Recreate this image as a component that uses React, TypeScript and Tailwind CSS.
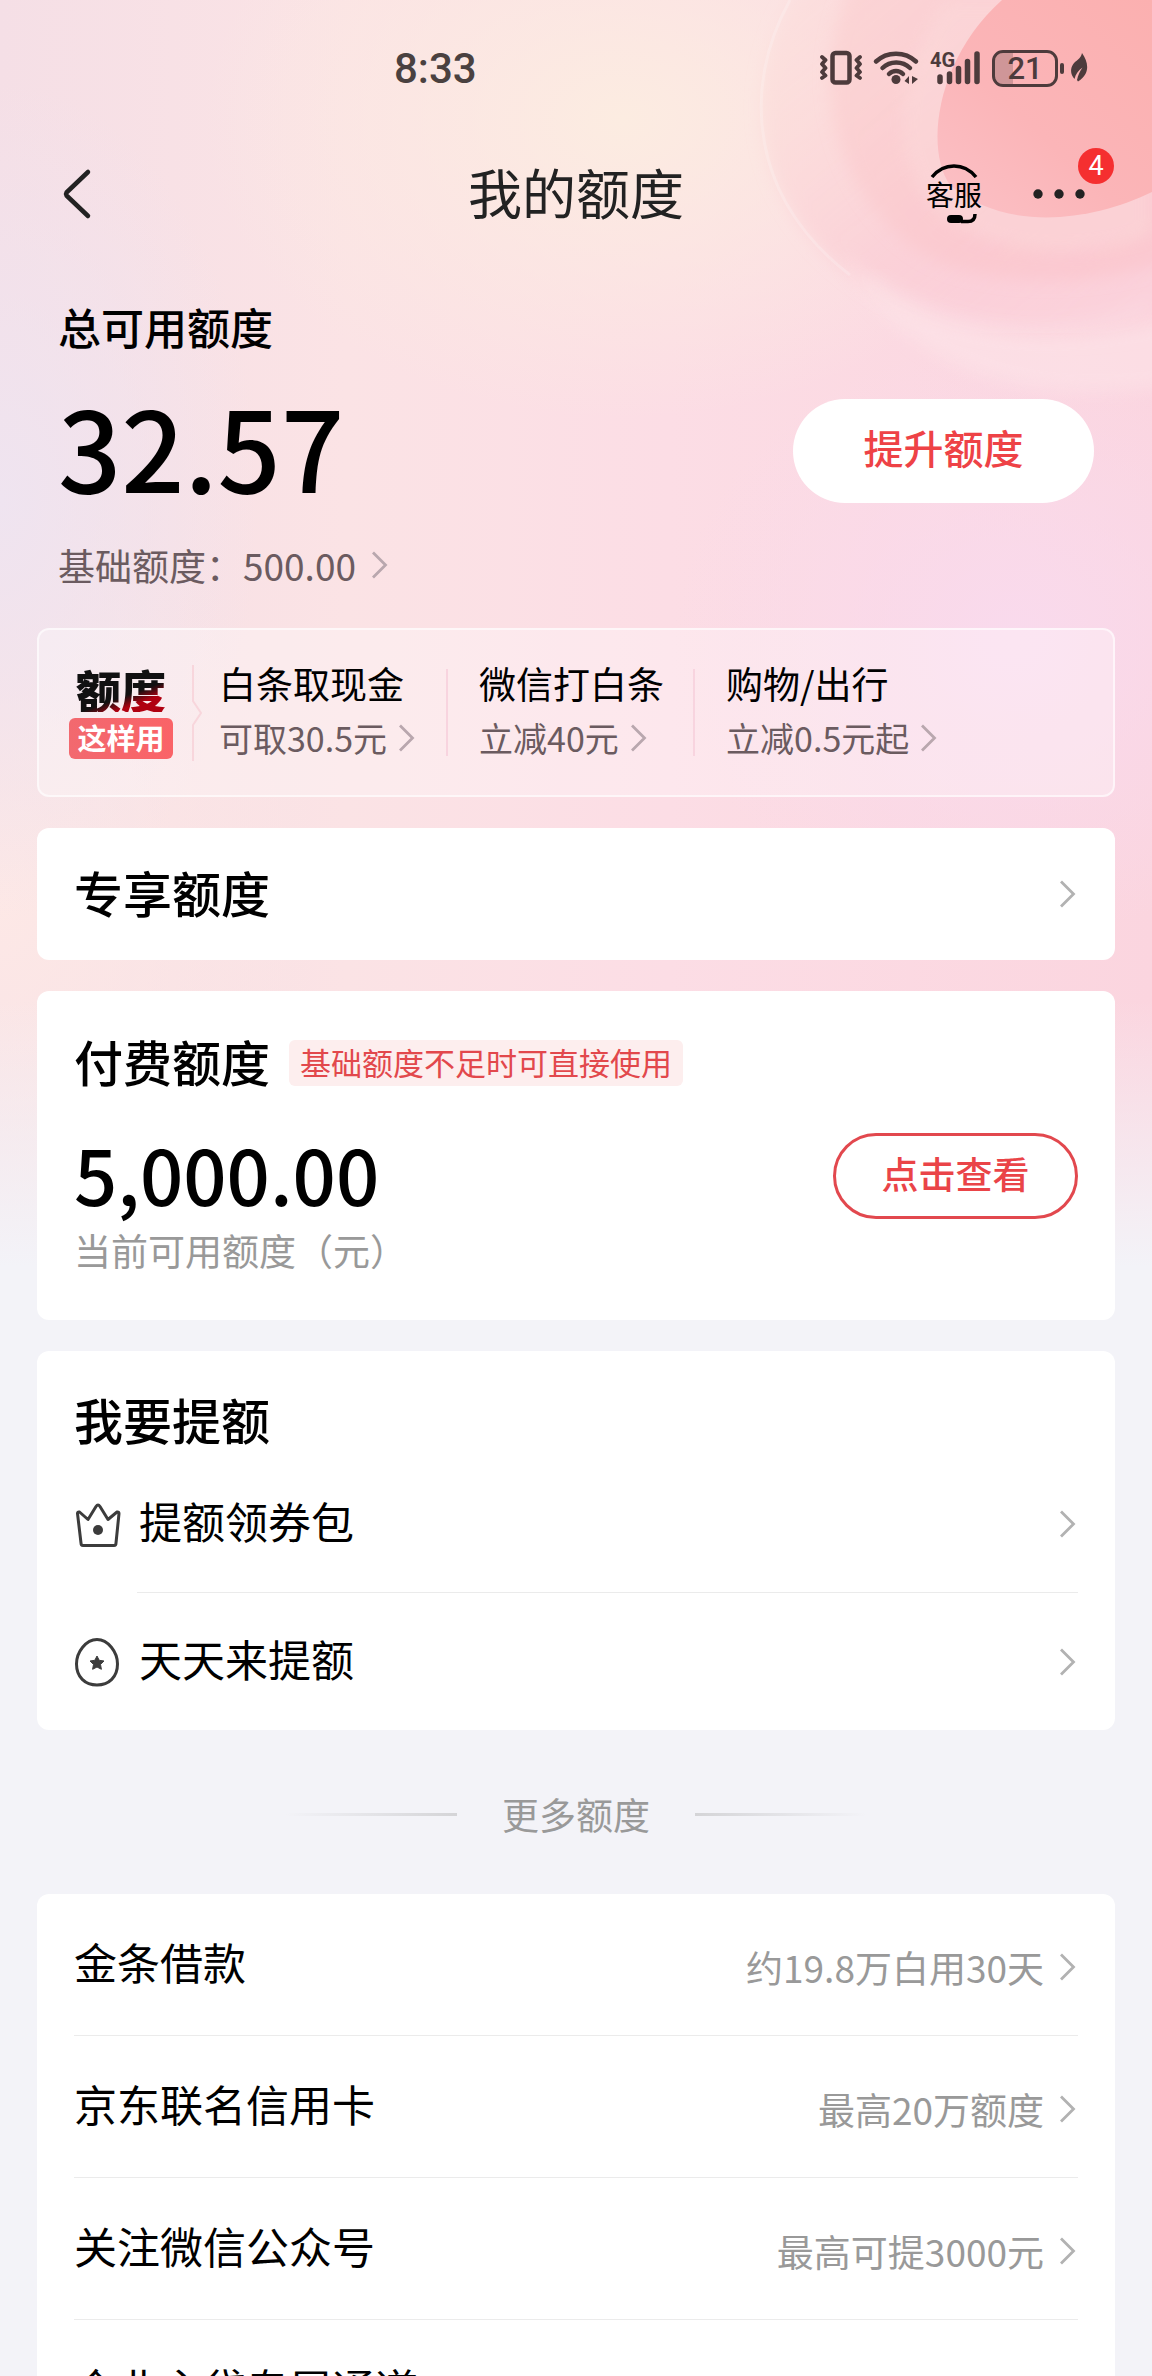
const usages = [
  { title: '白条取现金', desc: '可取30.5元' },
  { title: '微信打白条', desc: '立减40元' },
  { title: '购物/出行', desc: '立减0.5元起' },
];

const moreList = [
  { title: '金条借款', value: '约19.8万白用30天' },
  { title: '京东联名信用卡', value: '最高20万额度' },
  { title: '关注微信公众号', value: '最高可提3000元' },
  { title: '企业主贷专属通道', value: '' },
];

function Chevron({ className = 'text-[#b2b2b2]' }: { className?: string }) {
  return (
    <svg className={`h-[30px] w-[18px] shrink-0 ${className}`} viewBox="0 0 18 30" fill="none" stroke="currentColor" strokeWidth="2.8">
      <path d="M1 2.500 13.500 15 1 27.500" />
    </svg>
  );
}

function Background() {
  return (
    <>
      <div className="absolute inset-x-0 top-0 h-[1290px] bg-[radial-gradient(ellipse_420px_300px_at_54%_120px,#fcece1_0%,#fcece100_100%),radial-gradient(ellipse_260px_420px_at_0%_500px,#efe4f0_0%,#efe4f000_100%),radial-gradient(ellipse_340px_300px_at_88%_640px,#f9daed_0%,#f9daed00_100%),radial-gradient(ellipse_320px_420px_at_0%_900px,#fde8e6_0%,#fde8e600_100%),linear-gradient(90deg,#f5dfe6_0%,#fbe3e5_30%,#fcdde5_58%,#fbd5df_100%)]"></div>
      <svg className="absolute top-0 right-0 h-[460px] w-[460px]" viewBox="692 0 460 460" fill="none">
        <defs>
          <linearGradient id="halo" x1="0" y1="0" x2="0.900" y2="1">
            <stop offset="0" stopColor="#fcdcd8" stopOpacity="0.350" />
            <stop offset="0.600" stopColor="#fbc6cf" stopOpacity="0.550" />
            <stop offset="1" stopColor="#fcccd6" stopOpacity="0.400" />
          </linearGradient>
          <linearGradient id="ring" x1="0" y1="0" x2="1" y2="1">
            <stop offset="0" stopColor="#fbc9c9" stopOpacity="0.400" />
            <stop offset="1" stopColor="#fbbfc6" stopOpacity="0.500" />
          </linearGradient>
          <linearGradient id="core" x1="1" y1="0" x2="0.100" y2="1">
            <stop offset="0" stopColor="#fbb0b0" />
            <stop offset="0.600" stopColor="#fbb5b8" />
            <stop offset="1" stopColor="#fbc0c5" />
          </linearGradient>
          <filter id="soft" x="-10%" y="-10%" width="120%" height="120%">
            <feGaussianBlur stdDeviation="8" />
          </filter>
        </defs>
        <path d="M790 0C740 90 752 200 850 275 940 345 1070 350 1170 325V-20H800Z" fill="url(#halo)" filter="url(#soft)" />
        <path d="M845 0C800 110 860 240 960 270 1040 290 1110 280 1170 262V-20H850Z" fill="url(#ring)" filter="url(#soft)" />
        <path d="M945 0C900 60 880 160 940 215 1010 265 1100 255 1152 235V0Z" fill="#fcdcdc" opacity="0.450" filter="url(#soft)" />
        <path d="M1002 0C935 60 925 150 950 185 1005 232 1090 222 1152 192V0Z" fill="url(#core)" />
        <path d="M842 250C920 340 1050 350 1180 315V385C1010 412 890 360 842 250Z" fill="#fde6e9" opacity="0.500" filter="url(#soft)" />
        <path d="M790 0C740 90 752 200 850 275" stroke="#fff" strokeOpacity="0.200" strokeWidth="3" />
        <path d="M870 275C950 335 1070 340 1152 305" stroke="#fff" strokeOpacity="0.200" strokeWidth="8" filter="url(#soft)" />
      </svg>
      <div className="absolute inset-x-0 top-[1000px] h-[290px] bg-[linear-gradient(180deg,#f3f3f800_0%,#f3f3f8_92%)]"></div>
    </>
  );
}

function StatusIcons() {
  return (
    <div className="flex items-center text-[#4d3b3c]">
      <svg className="h-[38px] w-[100px]" viewBox="819 49 100 38" fill="none" stroke="currentColor" strokeLinecap="round" strokeLinejoin="round">
        <rect x="831.500" y="53" width="17" height="29.500" rx="3" strokeWidth="4.500" />
        <path d="M821 57l3.500 3-3.500 4 3.500 4-3.500 4 3.500 3.500-3.500 2.500M859 57l-3.500 3 3.500 4-3.500 4 3.500 4-3.500 3.500 3.500 2.500" strokeWidth="3.800" />
        <path d="M875 61.500c11-10.500 29-10.500 40 0M881.500 68c7.500-7.500 20-7.500 27.500 0M888 74c4-4 10-4 14 0" strokeWidth="4.500" />
        <circle cx="895" cy="79.500" r="4.500" fill="currentColor" stroke="none" />
        <path d="M908 76v8l-4.500-3zM911 84v-8l6 3z" fill="currentColor" stroke="none" />
      </svg>
      <div className="relative ml-[10px] h-[38px] w-[52px]">
        <span className="absolute top-0 left-0 font-['Roboto',sans-serif] text-[20px] leading-[22px] font-bold">4G</span>
        <svg className="h-[38px] w-[52px]" viewBox="929 49 52 38" stroke="currentColor" strokeWidth="5.500" strokeLinecap="round">
          <path d="M939 77v4.500M948.500 74v7.500M957.500 68.500v13M966.500 61.500v20M976 54v27.500" />
        </svg>
      </div>
      <div className="relative ml-[10px] flex h-[37px] w-[66px] items-center justify-center overflow-hidden rounded-[11px] border-[3px] border-current">
        <span className="absolute inset-y-0 left-0 w-[18px] bg-[#4d3b3c]/25"></span>
        <span className="font-['Roboto',sans-serif] text-[31px] leading-[31px] font-medium">21</span>
      </div>
      <span className="ml-[2px] h-[11px] w-1 rounded-full bg-current"></span>
      <svg className="ml-[6px] h-[30px] w-[18px]" viewBox="0 0 18 30" fill="currentColor">
        <path d="M12 0c7 10 8 21-4 28.500L7 27c1-5 3-9 5.500-12.500C8.500 17.500 5.500 21 4.500 26 .5 22 0 16 3 11.500 5.500 7.500 11 6 12 0Z" />
      </svg>
    </div>
  );
}

export default function App() {
  return (
    <main lang="zh-CN" className="relative h-screen w-full overflow-hidden bg-[#f3f3f8] font-['Noto_Sans_CJK_SC',sans-serif] text-black">
      <Background />

      <div className="relative">
        <div className="flex h-[136px] items-center justify-between pr-16 pl-[394px]">
          <span className="pt-[2px] font-['Roboto',sans-serif] text-[42px] leading-[48px] font-medium text-[#4a4140]">8:33</span>
          <StatusIcons />
        </div>

        <header className="grid h-[116px] grid-cols-3 items-center px-[58px] text-[#222]">
          <button type="button" aria-label="返回" className="justify-self-start">
            <svg className="h-[54px] w-[36px]" viewBox="0 0 36 54" fill="none" stroke="currentColor" strokeWidth="4.500" strokeLinecap="round" strokeLinejoin="round">
              <path d="M30 5 8.500 25.500Q7.500 27 8.500 28.500L30 49" />
            </svg>
          </button>
          <h1 className="pb-1 text-center text-[54px] leading-[60px] whitespace-nowrap">我的额度</h1>
          <div className="flex items-center gap-[50px] justify-self-end pr-2">
            <button type="button" className="flex flex-col items-center text-black">
              <svg className="h-[14px] w-[48px]" viewBox="0 0 48 14" fill="none" stroke="currentColor" strokeWidth="3.500">
                <path d="M2 13Q11 2 24 2T46 13" />
              </svg>
              <span className="pb-[2px] text-[28px] leading-[32px]">客服</span>
              <svg className="h-[12px] w-[48px]" viewBox="0 0 48 12" fill="none" stroke="currentColor" strokeWidth="3.500">
                <path d="M31 9.500H38Q45 9.500 45 2" />
                <rect x="17" y="3" width="16" height="8" rx="4" fill="currentColor" stroke="none" />
              </svg>
            </button>
            <button type="button" aria-label="更多" className="relative">
              <svg className="h-[12px] w-[54px]" viewBox="0 0 54 12" fill="currentColor">
                <circle cx="6" cy="6" r="4.700" />
                <circle cx="27" cy="6" r="4.700" />
                <circle cx="48" cy="6" r="4.700" />
              </svg>
              <span className="absolute -top-10 -right-7 flex size-9 items-center justify-center rounded-full bg-[#f52f30] font-['Roboto',sans-serif] text-[27px] leading-9 text-white">4</span>
            </button>
          </div>
        </header>

        <section className="px-[58px] pt-11">
          <h2 className="text-[43px] leading-[60px] font-medium">总可用额度</h2>
          <div className="mt-[35px] flex items-center justify-between">
            <span className="pb-3 text-[111px] leading-[108px] font-medium">32.57</span>
            <button type="button" className="h-[104px] w-[301px] rounded-full bg-white pb-2 text-[40px] font-medium text-[#ee4246]">提升额度</button>
          </div>
          <a href="#base" className="mt-[29px] flex items-center text-[37px] leading-[50px] text-[#6b5b60]">
            基础额度：500.00
            <Chevron className="ml-4 text-[#b9a7ae]" />
          </a>
        </section>

        <div className="mt-[38px] flex flex-col gap-[31px] px-[37px]">
          <section className="flex h-[169px] items-center rounded-xl border-2 border-white/60 bg-white/30 pl-[30px]">
            <div className="flex w-[104px] flex-col items-center">
              <span className="mb-[6px] bg-[linear-gradient(160deg,#111_60%,#b00010_76%)] bg-clip-text text-[45px] leading-[45px] font-black text-transparent">额度</span>
              <span className="w-full rounded-md bg-linear-to-r from-[#f2696f] to-[#fa6367] pb-[2px] text-center text-[29px] leading-[39px] font-bold text-white">这样用</span>
            </div>
            <svg className="ml-[18px] h-[96px] w-[12px]" viewBox="0 0 12 96" fill="none" stroke="#f8d6dc" strokeWidth="2">
              <path d="M2 0V36L10 48 2 60V96" />
            </svg>
            {usages.map((item, i) => (
              <div key={item.title} className="flex items-center">
                {i > 0 && <span className="h-[87px] w-[2px] bg-[#f8d4df]"></span>}
                <a href="#use" className={i > 0 ? 'flex flex-col gap-[7px] pr-[29px] pb-1 pl-[31px]' : 'flex flex-col gap-[7px] pr-[29px] pb-1 pl-4'}>
                  <span className="text-[37px] leading-[48px]">{item.title}</span>
                  <span className="flex items-center gap-3 text-[34px] leading-[48px] text-[#6b5b60]">
                    {item.desc}
                    <Chevron className="text-[#b9a7ae]" />
                  </span>
                </a>
              </div>
            ))}
          </section>

          <a href="#exclusive" className="flex items-center justify-between rounded-xl bg-white px-[37px] py-9">
            <h2 className="pb-1 text-[49px] leading-[56px] font-medium">专享额度</h2>
            <Chevron />
          </a>

          <section className="rounded-xl bg-white px-[37px] pt-[42px] pb-[45px]">
            <div className="flex items-center gap-[19px]">
              <h2 className="pb-1 text-[49px] leading-[56px] font-medium">付费额度</h2>
              <span className="rounded-md bg-[#fdeeee] px-[11px] pb-[2px] text-[31px] leading-[44px] text-[#e2484c]">基础额度不足时可直接使用</span>
            </div>
            <div className="mt-[38px] flex items-center justify-between">
              <span className="pb-[6px] text-[76px] leading-[84px] font-medium">5,000.00</span>
              <button type="button" className="h-[86px] w-[245px] rounded-full border-[3px] border-[#e2484e] pb-1 text-[37px] font-medium text-[#ea4448]">点击查看</button>
            </div>
            <p className="mt-1 text-[37px] leading-[50px] text-[#999]">当前可用额度（元）</p>
          </section>

          <section className="rounded-xl bg-white px-[37px] pt-[38px]">
            <h2 className="mb-[7px] text-[49px] leading-[60px] font-medium">我要提额</h2>
            <a href="#coupon" className="flex h-[137px] items-center">
              <svg className="h-[50px] w-[48px]" viewBox="0 0 48 50" fill="none" stroke="#3c3c3c" strokeWidth="3" strokeLinejoin="round">
                <path d="M3.500 13.500Q3.500 11.500 5.500 12L14 19.500 22 6.500Q24 3.500 26 6.500L34 19.500 43 12Q45 11.500 45 13.500L42 43Q42 45.500 40 45.500H9Q7 45.500 7 43Z" />
                <circle cx="24" cy="30" r="5" fill="#3c3c3c" stroke="none" />
              </svg>
              <span className="ml-[15px] flex h-full grow items-center justify-between border-b border-[#ebebeb]">
                <span className="pb-2 pl-[2px] text-[43px] leading-[60px]">提额领券包</span>
                <Chevron />
              </span>
            </a>
            <a href="#daily" className="flex h-[137px] items-center">
              <svg className="h-[50px] w-[48px]" viewBox="0 0 48 50" fill="none" stroke="#3c3c3c" strokeWidth="3">
                <path d="M23 2.500C34 2.500 43.500 15 43.500 27 43.500 40 35 48 23 48S2.500 40 2.500 27C2.500 15 12 2.500 23 2.500Z" />
                <path d="M23 19l2.200 4.300 4.800.7-3.500 3.400.9 4.900-4.400-2.300-4.400 2.300.9-4.900L16 24l4.800-.7z" fill="#3c3c3c" strokeWidth="1" />
              </svg>
              <span className="ml-[15px] flex h-full grow items-center justify-between">
                <span className="pb-2 pl-[2px] text-[43px] leading-[60px]">天天来提额</span>
                <Chevron />
              </span>
            </a>
          </section>
        </div>

        <div className="mt-[54px] mb-[50px] flex items-center justify-center gap-[45px] text-[37px] leading-[60px] text-[#999]">
          <span className="h-[3px] w-[171px] bg-linear-to-r from-transparent to-[#d4d4d7]"></span>
          更多额度
          <span className="h-[3px] w-[171px] bg-linear-to-l from-transparent to-[#d4d4d7]"></span>
        </div>

        <ul className="mx-[37px] rounded-t-xl bg-white px-[37px]">
          {moreList.map((item) => (
            <li key={item.title}>
              <a href="#more" className="flex h-[142px] items-center justify-between border-b border-[#ebebeb]">
                <span className="pb-2 text-[43px] leading-[60px]">{item.title}</span>
                <span className="flex items-center gap-4 pt-1 text-[37px] leading-[50px] text-[#999]">
                  {item.value}
                  <Chevron />
                </span>
              </a>
            </li>
          ))}
        </ul>
      </div>
    </main>
  );
}
